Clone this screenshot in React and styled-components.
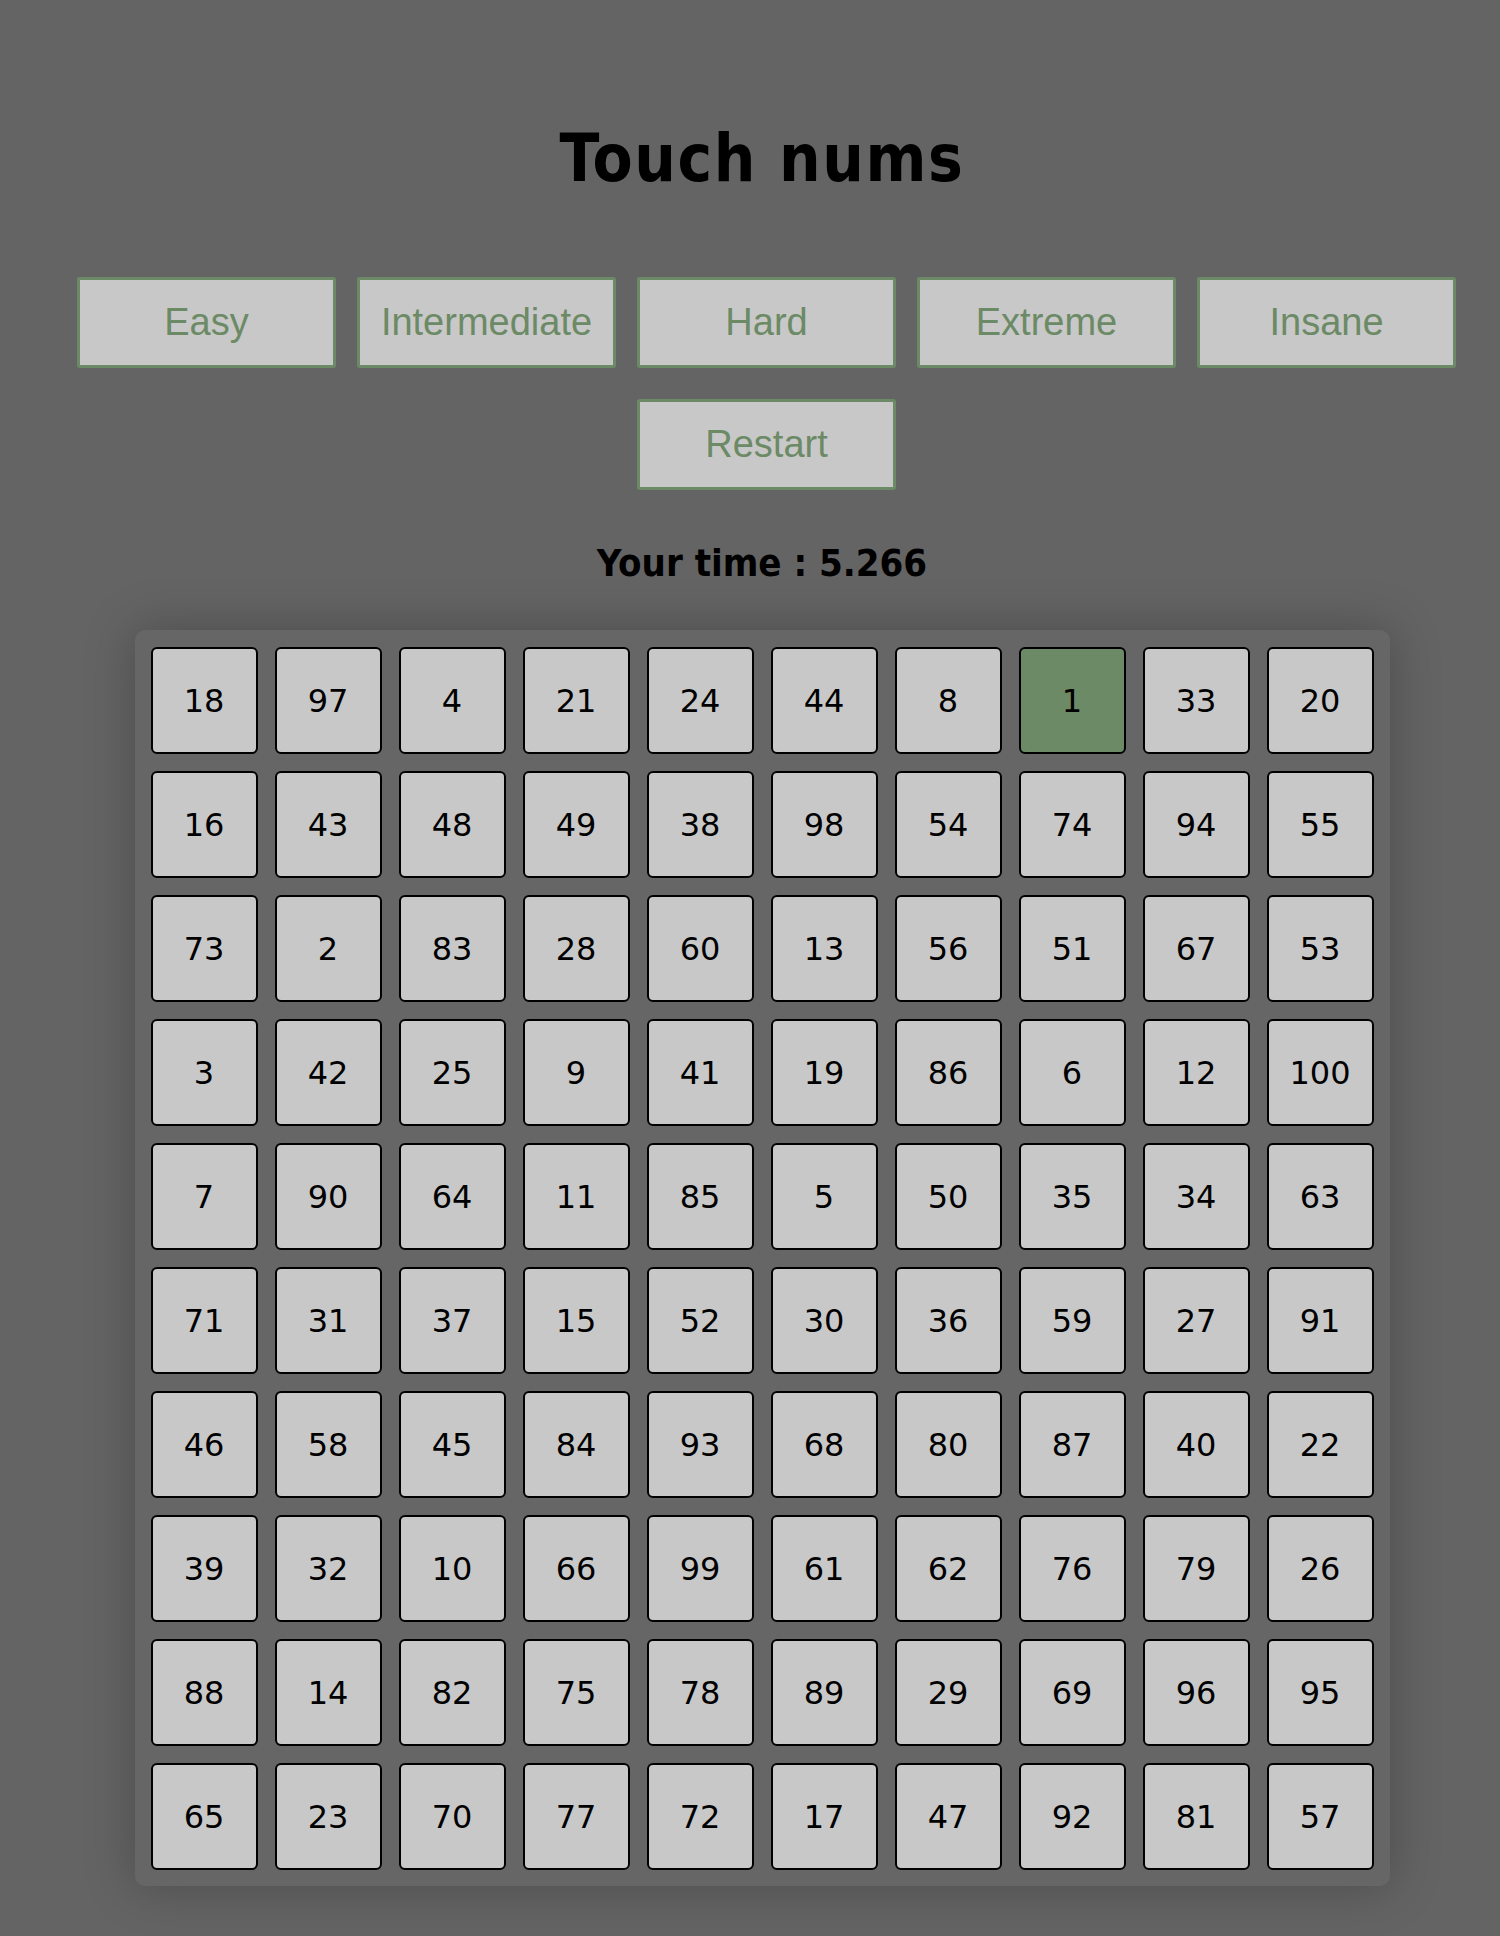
import React from "react";
import styled, { createGlobalStyle } from "styled-components";

const GlobalStyle = createGlobalStyle`
  body {
    margin: 0;
    background-color: #646464;
  }
`;

const Page = styled.div`
  min-height: 1936px;
  padding-left: 24px;
  display: flex;
  flex-direction: column;
  align-items: center;
`;

const Title = styled.h1`
  margin: 119px 0 0;
  height: 80px;
  line-height: 80px;
  font-family: "DejaVu Sans Condensed", "DejaVu Sans", sans-serif;
  font-stretch: condensed;
  font-weight: bold;
  font-size: 65px;
  letter-spacing: 1.6px;
  color: #000;
`;

const Controls = styled.div`
  margin-top: 78px;
  display: flex;
  flex-direction: column;
  gap: 31px;
  align-self: stretch;
  padding-left: 9px;
`;

const ButtonRow = styled.div`
  display: flex;
  justify-content: center;
  gap: 21px;
`;

const LevelButton = styled.button`
  width: 259px;
  height: 91px;
  box-sizing: border-box;
  background-color: #c8c8c8;
  border: 3px solid #6b8a65;
  border-radius: 3px;
  color: #6b8a65;
  font-family: "Liberation Sans", Arial, sans-serif;
  font-size: 38px;
  padding: 0;
  cursor: pointer;
`;

const Time = styled.div`
  margin-top: 49px;
  height: 48px;
  line-height: 48px;
  font-family: "DejaVu Sans Condensed", "DejaVu Sans", sans-serif;
  font-stretch: condensed;
  font-weight: bold;
  font-size: 38px;
  color: #000;
`;

const Board = styled.div`
  margin-top: 43px;
  display: grid;
  grid-template-columns: repeat(10, 107px);
  grid-auto-rows: 107px;
  gap: 17px;
  padding: 17px 16px 16px;
  background-color: #666;
  border-radius: 10px;
  box-shadow: 0 0 50px rgba(0, 0, 0, 0.25);
`;

const Tile = styled.div`
  box-sizing: border-box;
  display: flex;
  align-items: center;
  justify-content: center;
  background-color: ${(p) => (p.$active ? "#6b8a65" : "#c8c8c8")};
  border: 2px solid #000;
  border-radius: 6px;
  font-family: "DejaVu Sans", sans-serif;
  font-size: 32px;
  color: #000;
`;

const levels = ["Easy", "Intermediate", "Hard", "Extreme", "Insane"];

const nums = [
  18, 97, 4, 21, 24, 44, 8, 1, 33, 20,
  16, 43, 48, 49, 38, 98, 54, 74, 94, 55,
  73, 2, 83, 28, 60, 13, 56, 51, 67, 53,
  3, 42, 25, 9, 41, 19, 86, 6, 12, 100,
  7, 90, 64, 11, 85, 5, 50, 35, 34, 63,
  71, 31, 37, 15, 52, 30, 36, 59, 27, 91,
  46, 58, 45, 84, 93, 68, 80, 87, 40, 22,
  39, 32, 10, 66, 99, 61, 62, 76, 79, 26,
  88, 14, 82, 75, 78, 89, 29, 69, 96, 95,
  65, 23, 70, 77, 72, 17, 47, 92, 81, 57,
];

export default function App() {
  return (
    <Page>
      <GlobalStyle />
      <Title>Touch nums</Title>
      <Controls>
        <ButtonRow>
          {levels.map((l) => (
            <LevelButton key={l}>{l}</LevelButton>
          ))}
        </ButtonRow>
        <ButtonRow>
          <LevelButton>Restart</LevelButton>
        </ButtonRow>
      </Controls>
      <Time>Your time : 5.266</Time>
      <Board>
        {nums.map((n) => (
          <Tile key={n} $active={n === 1}>
            {n}
          </Tile>
        ))}
      </Board>
    </Page>
  );
}
